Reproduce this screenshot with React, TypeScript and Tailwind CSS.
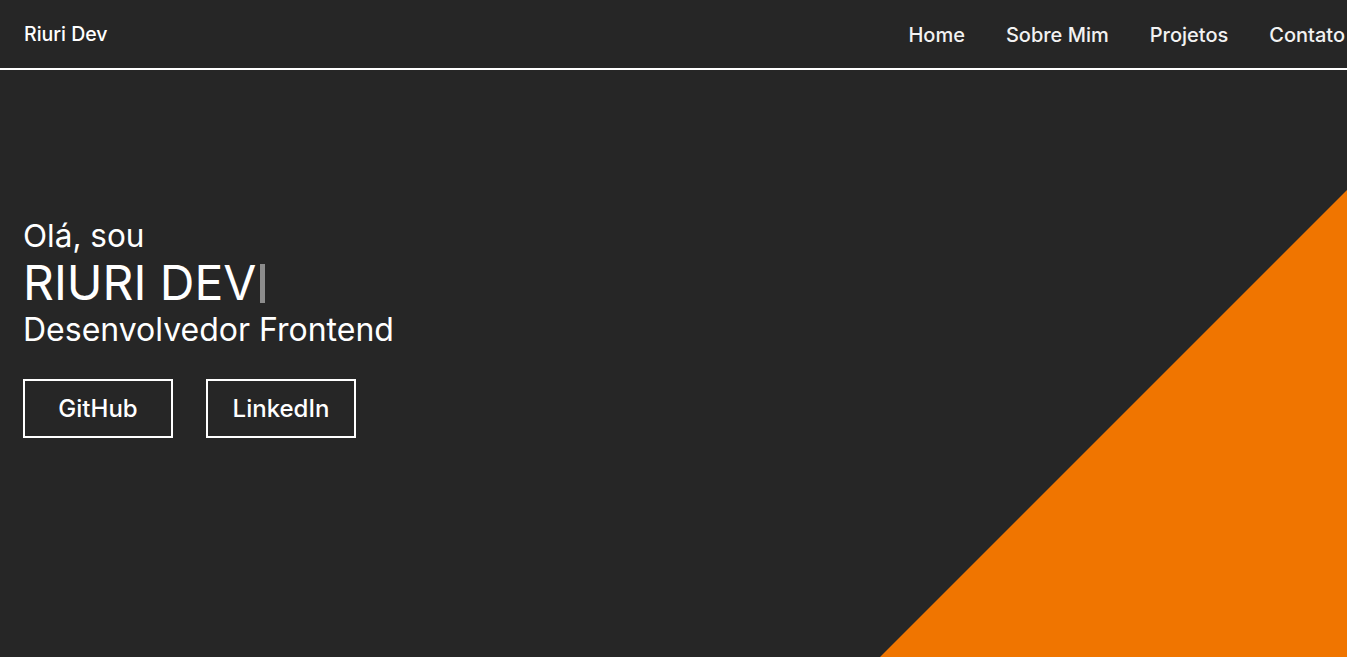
import React from "react";

export default function App() {
  return (
    <div
      className="relative h-[657px] w-full overflow-hidden bg-[#262626] text-white"
      style={{ fontFamily: "Inter, 'Noto Sans', sans-serif" }}
    >
      <header className="flex h-[70px] items-center justify-between border-b-2 border-white pb-0 pl-6 pr-[2px] pt-[2px]">
        <span className="text-[19.5px] font-medium">Riuri Dev</span>
        <nav className="flex items-center gap-[41px] text-[20px] font-medium text-[#f2f2f2]">
          <a>Home</a>
          <a>Sobre Mim</a>
          <a>Projetos</a>
          <a>Contato</a>
        </nav>
      </header>

      <div
        className="pointer-events-none absolute bottom-0 right-0 h-[467px] w-[467px] bg-[#f07500]"
        style={{ clipPath: "polygon(100% 0, 100% 100%, 0 100%)" }}
      />

      <main className="relative flex flex-col pl-[23px] pt-[146px]">
        <p className="text-[31.5px] leading-[40px]">Olá, sou</p>
        <h1 className="flex items-center text-[48px] leading-[54px] font-normal">
          RIURI DEV
          <span className="ml-[4px] inline-block h-[39px] w-[5px] bg-[#8c8c8c]" />
        </h1>
        <p className="text-[32px] leading-[40px]">Desenvolvedor Frontend</p>
        <div className="mt-[29px] flex gap-[33px]">
          <button className="flex h-[59px] w-[150px] items-center justify-center border-2 border-white text-[24px] font-medium">
            GitHub
          </button>
          <button className="flex h-[59px] w-[150px] items-center justify-center border-2 border-white text-[24px] font-medium">
            LinkedIn
          </button>
        </div>
      </main>
    </div>
  );
}
